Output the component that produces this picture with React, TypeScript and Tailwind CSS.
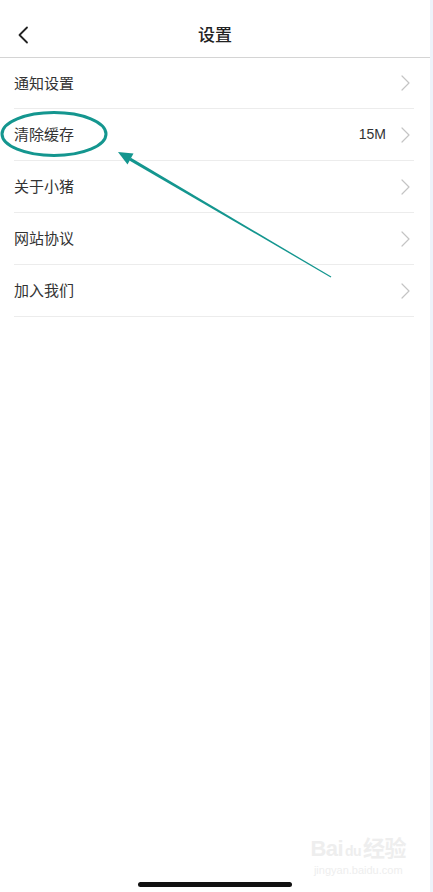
import React from 'react';

const rows = [
  { label: '通知设置', value: '' },
  { label: '清除缓存', value: '15M' },
  { label: '关于小猪', value: '' },
  { label: '网站协议', value: '' },
  { label: '加入我们', value: '' },
];

const Chevron = ({ className }: { className?: string }) => (
  <svg width="9" height="16" viewBox="0 0 9 16" className={className} fill="none">
    <path d="M1 1l7 7-7 7" stroke="currentColor" strokeWidth="1.2" strokeLinecap="round" strokeLinejoin="round" />
  </svg>
);

export default function App() {
  return (
    <div
      className="relative w-[433px] h-[892px] bg-[#eef3fa] overflow-hidden flex"
      style={{ fontFamily: '"Noto Sans CJK SC", "Noto Sans", sans-serif' }}
    >
      <div className="w-[430px] h-full bg-white flex flex-col">
        {/* Header */}
        <div className="relative h-[58px] flex items-center justify-center border-b border-[#d4d4d4]">
          <button className="absolute left-[17px] top-[26px] text-[#222]">
            <svg width="12" height="18" viewBox="0 0 12 18" fill="none">
              <path d="M10 1.5L2.5 9l7.5 7.5" stroke="currentColor" strokeWidth="1.8" strokeLinecap="round" strokeLinejoin="round" />
            </svg>
          </button>
          <h1 className="text-[17px] text-[#222] mt-[10px] font-medium">设置</h1>
        </div>

        {/* List */}
        <div className="pl-[14px] pr-[16px] flex flex-col">
          {rows.map((r, i) => (
            <div
              key={r.label}
              className={`${i === 0 ? 'h-[51px]' : 'h-[52px]'} flex items-center justify-between border-b border-[#ececec]`}
            >
              <span className="text-[15px] text-[#333]">{r.label}</span>
              <div className="flex items-center gap-[15px] pr-[4px]">
                {r.value && (
                  <span className="text-[14px] text-[#333]" style={{ fontFamily: '"Liberation Sans", sans-serif' }}>
                    {r.value}
                  </span>
                )}
                <Chevron className="text-[#c4c4c4]" />
              </div>
            </div>
          ))}
        </div>

        <div className="flex-1" />

        {/* Watermark */}
        <div className="absolute right-[27px] bottom-[16px] flex flex-col items-center text-[#eeeeee] leading-none">
          <span className="text-[22px] font-bold tracking-tight" style={{ fontFamily: '"Liberation Sans", sans-serif' }}>
            Bai<span className="text-[14px] mx-[2px]">du</span><span style={{ fontFamily: '"Noto Sans CJK SC", sans-serif' }}>经验</span>
          </span>
          <span className="text-[11px] mt-[5px]" style={{ fontFamily: '"Liberation Sans", sans-serif' }}>jingyan.baidu.com</span>
        </div>

        {/* Home indicator */}
        <div className="flex justify-center pb-[5px]">
          <div className="w-[154px] h-[5px] rounded-full bg-[#111]" />
        </div>
      </div>

      {/* Annotation overlay */}
      <svg className="absolute left-0 top-0 pointer-events-none" width="433" height="892">
        <ellipse cx="54" cy="134" rx="52" ry="21.5" fill="none" stroke="#14968f" strokeWidth="3" />
        <polygon points="331.3,276.6 330.7,277.4 129.3,160.4 130.9,157.8" fill="#14968f" />
        <polygon points="118,152 133.5,153.5 127.5,164.5" fill="#14968f" />
      </svg>
    </div>
  );
}
